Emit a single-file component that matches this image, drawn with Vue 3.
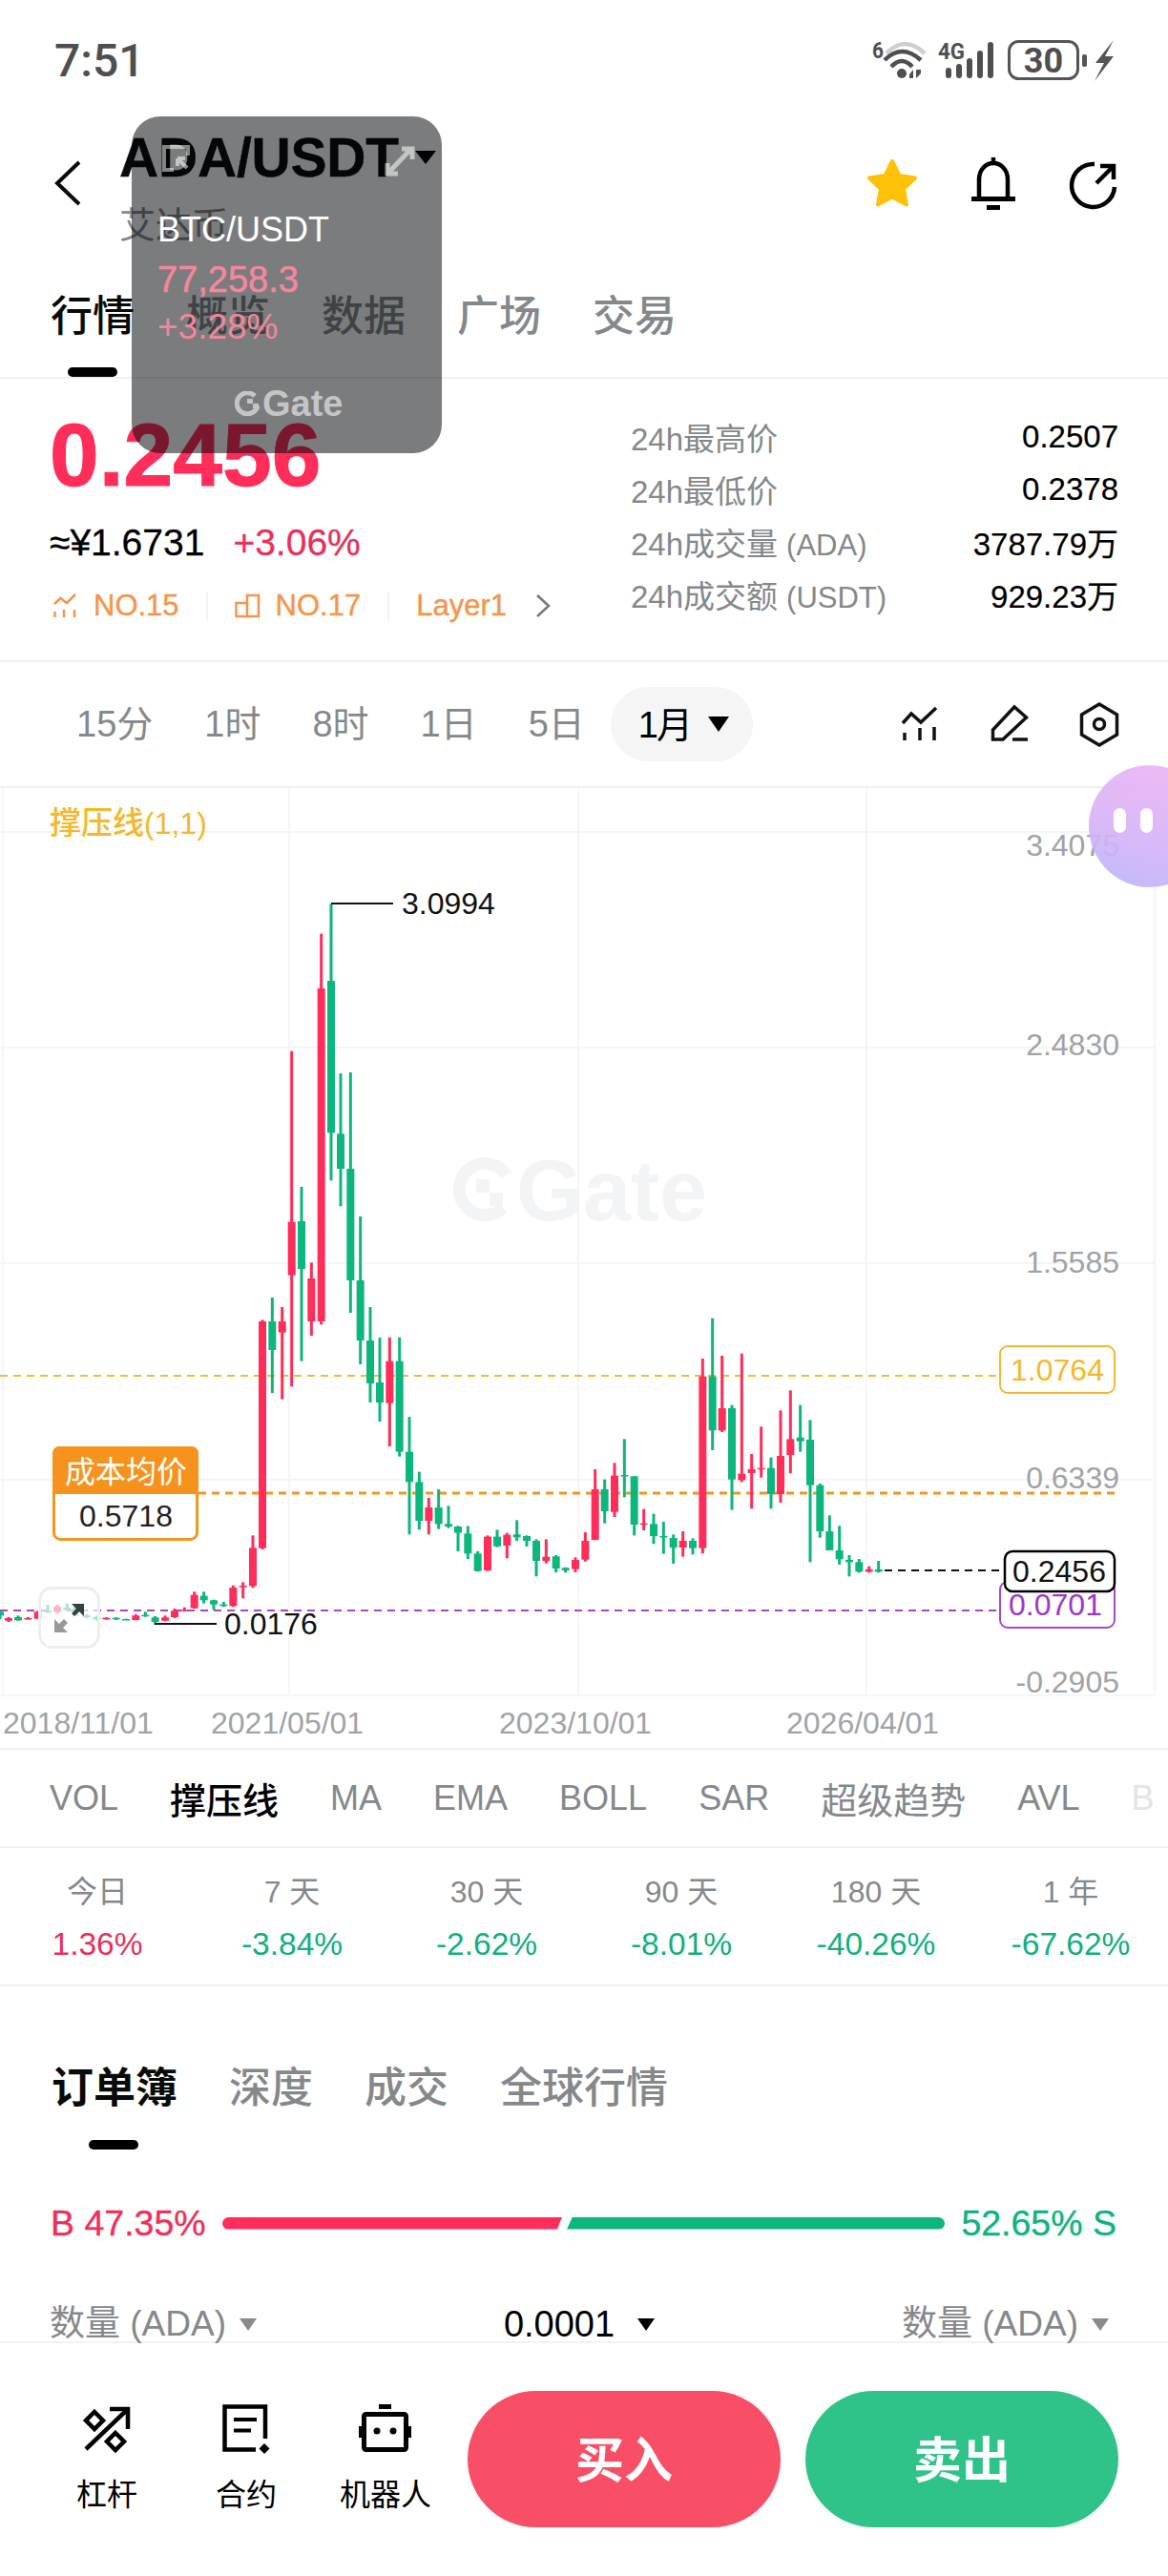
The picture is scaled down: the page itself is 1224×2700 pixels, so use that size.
<script setup>
const RED = '#ff2d5a'
const GREEN = '#0db67c'

function section(ox, oy, list) {
  return list.map(([x, c, wt, bt, bb, wb]) => ({
    x: ox + x / 3,
    color: c === 'r' ? RED : GREEN,
    wt: oy + wt / 3,
    wb: oy + wb / 3,
    bt: oy + bt / 3,
    bh: Math.max((bb - bt) / 3, 1.5)
  }))
}

const candles = [
  ...section(0, 1480, [
    [0,'g',625,628,640,652],[27,'r',645,648,656,660],[57,'g',640,645,655,656],[88,'r',645,648,651,652],
    [119,'r',625,628,650,651],[150,'g',606,625,630,632],[180,'r',606,612,628,634],[211,'g',602,615,622,625],
    [242,'g',605,612,630,640],[273,'g',636,640,645,648],[304,'g',640,645,652,656],[334,'r',646,647,652,653],
    [365,'g',646,647,652,654],[396,'g',650,651,653,654],[427,'r',636,640,654,655],[457,'g',628,638,642,644],
    [488,'g',642,646,660,668],[519,'r',640,646,656,658],[549,'r',618,625,645,648],[580,'r',614,622,625,626],
    [611,'r',565,575,617,618],[641,'g',565,578,592,602],[672,'g',590,592,605,622],[703,'g',597,605,610,613],
    [733,'r',545,552,610,613],[764,'r',535,546,551,586],[795,'r',388,427,547,553],[825,'r',-290,-285,428,432]
  ]),
  ...section(200, 900, [
    [256,'g',1380,1455,1545,1680],[287,'r',1410,1455,1490,1700],[317,'r',605,1142,1310,1660],[348,'g',1032,1140,1290,1580],
    [379,'r',1270,1320,1455,1500],[410,'r',236,408,1455,1465],[441,'g',142,384,862,1012],[471,'g',675,865,975,1093],
    [502,'g',672,975,1326,1428],[533,'g',1125,1326,1515,1590],[564,'g',1410,1515,1650,1710],[594,'g',1506,1647,1710,1770]
  ]),
  ...section(400, 1300, [
    [25,'r',305,380,512,648],[56,'g',305,380,665,680],[87,'g',555,665,760,925],[118,'g',728,760,882,910],
    [148,'r',810,840,882,925],[179,'g',783,840,892,908],[210,'g',835,892,900,905],[240,'g',898,900,920,978],
    [271,'g',898,922,985,1002],[302,'g',978,985,1040,1042],[333,'r',928,932,1038,1040],[363,'g',910,932,962,965],
    [394,'r',920,926,960,1000],[425,'g',880,925,934,945],[456,'g',928,930,945,963],[486,'g',940,945,1008,1057],
    [517,'r',940,995,1008,1016],[548,'g',990,994,1032,1044],[578,'g',1028,1030,1038,1045],[609,'r',997,1005,1034,1044],
    [640,'r',918,945,1004,1010],[671,'r',720,783,942,943],[701,'g',752,783,852,890],[732,'r',700,740,854,870],
    [763,'g',625,738,741,808],[794,'g',742,742,894,928],[824,'r',845,890,894,912],[855,'g',860,892,930,955],
    [886,'g',885,930,934,986],[917,'g',925,936,966,1017],[947,'r',915,945,966,995],[978,'g',937,945,968,988],
    [1009,'r',372,428,968,985],[1040,'g',245,428,598,660],[1070,'r',363,528,598,603],[1101,'g',518,528,752,848],
    [1132,'r',356,734,754,760],[1163,'r',672,720,732,844],[1193,'r',586,716,719,746],[1224,'g',683,716,798,844]
  ]),
  ...section(800, 1300, [
    [54,'r',535,678,798,825],[85,'r',472,625,675,733],[116,'g',518,620,632,665],[147,'g',565,627,770,1012],
    [178,'g',765,770,915,935],[208,'g',865,915,975,975],[239,'g',898,975,1003,1020],[270,'g',990,1005,1012,1057],
    [301,'g',1002,1012,1042,1045],[332,'r',1025,1035,1042,1045],[362,'g',1008,1035,1042,1045]
  ])
]

const gridV = [3, 303, 606, 908, 1210]
const gridH = [872, 1098, 1324, 1551, 1777]
const yLabels = [
  { t: '3.4075', y: 897 }, { t: '2.4830', y: 1106 }, { t: '1.5585', y: 1334 },
  { t: '0.6339', y: 1560 }, { t: '-0.2905', y: 1774 }
]
const xLabels = [
  { t: '2018/11/01', x: 3 }, { t: '2021/05/01', x: 221 }, { t: '2023/10/01', x: 523 }, { t: '2026/04/01', x: 824 }
]
const tabs = ['概览', '数据', '广场', '交易']
const intervals = ['15分', '1时', '8时', '1日', '5日']
const stats = [
  { l: '24h最高价', s: '', v: '0.2507' },
  { l: '24h最低价', s: '', v: '0.2378' },
  { l: '24h成交量', s: '(ADA)', v: '3787.79万' },
  { l: '24h成交额', s: '(USDT)', v: '929.23万' }
]
const indicators = [
  { t: 'VOL' }, { t: '撑压线', on: true, cjk: true }, { t: 'MA' }, { t: 'EMA' }, { t: 'BOLL' },
  { t: 'SAR' }, { t: '超级趋势', cjk: true }, { t: 'AVL' }
]
const periods = [
  { l: '今日', v: '1.36%', up: true }, { l: '7 天', v: '-3.84%' }, { l: '30 天', v: '-2.62%' },
  { l: '90 天', v: '-8.01%' }, { l: '180 天', v: '-40.26%' }, { l: '1 年', v: '-67.62%' }
]
const bookTabs = ['深度', '成交', '全球行情']
</script>

<template>
  <div class="page">
    <header class="status">
      <span class="time">7:51</span>
      <svg class="status-icons" viewBox="914 40 254 46" width="254" height="46">
        <text x="914" y="61" class="st-small" textLength="12" lengthAdjust="spacingAndGlyphs">6</text>
        <path d="M929 56Q948 36 969 56" fill="none" stroke="#cfcfcf" stroke-width="4.500" />
        <path d="M927 63Q945 45 965 63" fill="none" stroke="#4f4f4f" stroke-width="4.500" />
        <path d="M934 70Q945 58 956 70" fill="none" stroke="#4f4f4f" stroke-width="4.500" />
        <circle cx="945" cy="77" r="5" fill="#4f4f4f" />
        <path d="M953 82V78L957 73V82ZM960 73V82L965 77V73Z" fill="#4f4f4f" />
        <text x="983" y="62" class="st-small" textLength="28" lengthAdjust="spacingAndGlyphs">4G</text>
        <rect v-for="(b, i) in [[991,71],[1002,67],[1013,61],[1024,53],[1035,44]]" :key="i" :x="b[0]" :y="b[1]" width="6" :height="82 - b[1]" rx="3" fill="#4f4f4f" />
        <rect x="1057.500" y="43.500" width="72" height="39" rx="10" fill="none" stroke="#555" stroke-width="3" />
        <rect x="1134" y="57" width="5" height="13" rx="2" fill="#555" />
        <text x="1093.500" y="76" text-anchor="middle" class="st-batt">30</text>
        <path d="M1167 42L1148 66H1157L1147 85L1167 59H1158Z" fill="#555" />
      </svg>
    </header>

    <nav class="nav">
      <svg class="back" width="28" height="48" viewBox="0 0 28 48"><path d="M26 2L3 24L26 46" fill="none" stroke="#0a0a0a" stroke-width="4" /></svg>
      <div class="pair">
        <div class="pair-title"><span>ADA/USDT</span><i class="caret caret-lg"></i></div>
        <div class="pair-sub">艾达币</div>
      </div>
      <svg class="nav-icons" viewBox="905 160 268 64" width="268" height="64">
        <path d="M935 169L942.500 184L959 186.500L947 198L950 214.500L935 206.500L920 214.500L923 198L911 186.500L927.500 184Z" fill="#fdc10a" stroke="#fdc10a" stroke-width="4" stroke-linejoin="round" />
        <path d="M1041 165V171M1026 208V188C1026 178 1033 171 1041 171C1049 171 1056 178 1056 188V208" fill="none" stroke="#000" stroke-width="4.500" />
        <rect x="1018" y="206" width="46" height="5" fill="#000" />
        <rect x="1034" y="215" width="14" height="5" fill="#000" />
        <path d="M1147 172A22.500 22.500 0 1 0 1168 196" fill="none" stroke="#000" stroke-width="4.500" />
        <path d="M1153 174H1167V188M1167 174L1149 192" fill="none" stroke="#000" stroke-width="4.500" />
      </svg>
    </nav>

    <div class="tabs">
      <div class="tab active">行情<b class="bar"></b></div>
      <div v-for="t in tabs" :key="t" class="tab">{{ t }}</div>
    </div>

    <section class="hero">
      <div class="hero-left">
        <div class="price">0.2456</div>
        <div class="sub-price"><span>≈¥1.6731</span><span class="up">+3.06%</span></div>
        <div class="tags">
          <svg width="28" height="28" viewBox="55 621 28 28"><path d="M58 633L64.500 627L71 632L80 623M58.500 641V647M68 639V647M79 639V647" fill="none" stroke="#f5954a" stroke-width="2.500" /></svg>
          <span class="tag t1">NO.15</span>
          <i class="sep"></i>
          <svg class="ic2" width="28" height="28" viewBox="245 621 28 28"><path d="M247.500 632H259V646H247.500ZM259 646H271V624H259V632" fill="none" stroke="#f5954a" stroke-width="2.500" /></svg>
          <span class="tag t1">NO.17</span>
          <i class="sep"></i>
          <span class="tag t3">Layer1</span>
          <svg class="chev" width="16" height="26" viewBox="0 0 16 26"><path d="M2 2L14 13L2 24" fill="none" stroke="#777" stroke-width="2.500" /></svg>
        </div>
      </div>
      <div class="hero-right">
        <div v-for="s in stats" :key="s.l" class="stat">
          <span class="stat-l">{{ s.l }}<small v-if="s.s">{{ s.s }}</small></span>
          <span class="stat-v">{{ s.v }}</span>
        </div>
      </div>
    </section>

    <section class="intervals">
      <span v-for="t in intervals" :key="t" class="iv">{{ t }}</span>
      <span class="pill"><span class="pill-t">1月</span><i class="caret caret-md"></i></span>
      <svg class="iv-icons" viewBox="940 734 236 50" width="236" height="50">
        <path d="M946 758L955 748L965 757L981 742M948 768V776M964 763V776M979 762V776" fill="none" stroke="#111" stroke-width="3.500" />
        <path d="M1040.500 775V765L1063 741L1075.500 752L1051 775ZM1061 775H1077" fill="none" stroke="#111" stroke-width="3.500" />
        <path d="M1152 738L1170.500 749V770L1152 781L1133.500 770V749Z" fill="none" stroke="#111" stroke-width="3.500" />
        <circle cx="1152" cy="759" r="5.500" fill="none" stroke="#111" stroke-width="3.500" />
      </svg>
    </section>

    <section class="chart">
      <svg viewBox="0 826 1224 1006" width="1224" height="1006">
        <line v-for="x in gridV" :key="'v' + x" :x1="x" :x2="x" y1="826" y2="1777" stroke="#f4f5f5" stroke-width="2" />
        <line v-for="y in gridH" :key="'h' + y" x1="0" x2="1210" :y1="y" :y2="y" stroke="#f4f5f5" stroke-width="2" />

        <g fill="#f2f4f5">
          <path d="M531 1232A27 27 0 1 0 527 1266" fill="none" stroke="#f2f4f5" stroke-width="13" />
          <rect x="499" y="1236" width="14" height="14" />
          <rect x="513" y="1250" width="14" height="14" />
          <text x="541" y="1279" class="wm">Gate</text>
        </g>

        <line x1="0" x2="1047" y1="1442" y2="1442" stroke="#f5bb2d" stroke-width="2" stroke-dasharray="8 6" />
        <line x1="0" x2="1047" y1="1688" y2="1688" stroke="#a845cf" stroke-width="2" stroke-dasharray="8 6" />
        <line x1="208" x2="1168" y1="1565" y2="1565" stroke="#f0971f" stroke-width="3" stroke-dasharray="8 6" />
        <line x1="927" x2="1052" y1="1646" y2="1646" stroke="#111" stroke-width="2" stroke-dasharray="8 6" />

        <g v-for="(c, i) in candles" :key="i">
          <rect :x="c.x - 1.500" :y="c.wt" width="3" :height="c.wb - c.wt" :fill="c.color" />
          <rect :x="c.x - 4" :y="c.bt" width="8" :height="c.bh" :fill="c.color" />
        </g>

        <line x1="347" x2="412" y1="947" y2="947" stroke="#111" stroke-width="2" />
        <text x="421" y="958" class="lbl dark">3.0994</text>
        <line x1="162" x2="227" y1="1702" y2="1702" stroke="#111" stroke-width="2" />
        <text x="235" y="1713" class="lbl dark">0.0176</text>

        <text x="52" y="874" class="legend">撑压线<tspan class="legend-s">(1,1)</tspan></text>

        <text v-for="l in yLabels" :key="l.t" x="1173" :y="l.y" text-anchor="end" class="lbl grey">{{ l.t }}</text>
        <text v-for="l in xLabels" :key="l.t" :x="l.x" y="1817" class="lbl grey">{{ l.t }}</text>

        <rect x="1048" y="1411" width="120" height="49" rx="8" fill="#fff" stroke="#f5b82a" stroke-width="2" />
        <text x="1108" y="1447" text-anchor="middle" class="lbl" fill="#f5b82a">1.0764</text>
        <rect x="1048" y="1658" width="120" height="48" rx="8" fill="#fff" stroke="#a845cf" stroke-width="2" />
        <text x="1106" y="1693" text-anchor="middle" class="lbl" fill="#a136c9">0.0701</text>
        <rect x="1053" y="1626" width="115" height="42" rx="8" fill="#fff" stroke="#000" stroke-width="2.500" />
        <text x="1110" y="1658" text-anchor="middle" class="lbl dark">0.2456</text>

        <rect x="56.500" y="1517.500" width="150" height="96" rx="7" fill="#fff" stroke="#f0971f" stroke-width="3" />
        <path d="M55 1566V1523A7 7 0 0 1 62 1516H201A7 7 0 0 1 208 1523V1566Z" fill="#f5931e" />
        <text x="132" y="1554" text-anchor="middle" class="avg">成本均价</text>
        <text x="132" y="1600" text-anchor="middle" class="lbl" fill="#222">0.5718</text>

        <rect x="41.500" y="1664.500" width="62" height="62" rx="13" fill="#fff" fill-opacity=".65" stroke="#eee" stroke-width="3" />
        <path d="M88 1681V1694L83 1689L78 1694L75 1691L80 1686L75 1681Z" fill="#33413f" />
        <path d="M57 1711V1697L62 1702L67 1697L71 1701L66 1706L71 1711Z" fill="#999" />
      </svg>
    </section>

    <section class="indicators">
      <span v-for="n in indicators" :key="n.t" class="ind" :class="{ on: n.on, cjk: n.cjk }">{{ n.t }}</span>
      <span class="ind faded">B</span>
    </section>

    <section class="periods">
      <div v-for="p in periods" :key="p.l" class="period">
        <span class="period-l">{{ p.l }}</span>
        <span class="period-v" :class="p.up ? 'up' : 'down'">{{ p.v }}</span>
      </div>
    </section>

    <section class="book">
      <div class="book-tabs">
        <div class="book-tab active">订单簿<b class="bar"></b></div>
        <div v-for="t in bookTabs" :key="t" class="book-tab">{{ t }}</div>
      </div>
      <div class="ratio">
        <span class="ratio-l">B 47.35%</span>
        <div class="ratio-bar"><i class="r"></i><i class="g"></i></div>
        <span class="ratio-r">52.65% S</span>
      </div>
      <div class="amount">
        <span class="am"><span>数量 (ADA)</span><i class="caret caret-grey"></i></span>
        <span class="am dark-am"><span>0.0001</span><i class="caret caret-sm"></i></span>
        <span class="am"><span>数量 (ADA)</span><i class="caret caret-grey"></i></span>
      </div>
    </section>

    <footer class="footer">
      <div class="tools">
        <div class="tool">
          <svg viewBox="80 2518 60 56" width="60" height="56">
            <path d="M88 2567L132 2525M113 2525H132V2546" fill="none" stroke="#000" stroke-width="4.500" />
            <path d="M97 2528L106 2537L97 2546L88 2537Z M119 2550L128 2559L119 2568L110 2559Z" fill="none" stroke="#000" stroke-width="4.500" />
          </svg>
          <span>杠杆</span>
        </div>
        <div class="tool">
          <svg viewBox="228 2518 60 56" width="60" height="56">
            <path d="M278 2556V2522.500H235.500V2567.500H268" fill="none" stroke="#000" stroke-width="4.500" />
            <path d="M245 2536H269M245 2547.500H263" fill="none" stroke="#000" stroke-width="4" />
            <path d="M277 2561L282.500 2566.500L277 2572L271.500 2566.500Z" fill="#000" />
          </svg>
          <span>合约</span>
        </div>
        <div class="tool">
          <svg viewBox="374 2518 60 56" width="60" height="56">
            <rect x="397" y="2520" width="13" height="5" fill="#000" />
            <rect x="381.500" y="2530.500" width="44" height="37" fill="none" stroke="#000" stroke-width="5" rx="2" />
            <rect x="376" y="2543" width="4" height="12" fill="#000" />
            <rect x="427" y="2543" width="4" height="12" fill="#000" />
            <circle cx="395" cy="2548" r="3.500" fill="#000" />
            <circle cx="412" cy="2548" r="3.500" fill="#000" />
          </svg>
          <span>机器人</span>
        </div>
      </div>
      <div class="btn buy">买入</div>
      <div class="btn sell">卖出</div>
    </footer>

    <aside class="pip">
      <svg class="pip-top" viewBox="0 0 325 70" width="325" height="70">
        <path d="M44 56H34V32H59V41" fill="none" stroke="#fff" stroke-opacity=".5" stroke-width="4" />
        <path d="M48 44L58 54M48 44H56M48 44V52" fill="none" stroke="#fff" stroke-opacity=".55" stroke-width="4" />
        <path d="M269 59L292 35M283 34H294V45M268 49V60H279" fill="none" stroke="#fff" stroke-opacity=".55" stroke-width="5" />
      </svg>
      <div class="pip-sym">BTC/USDT</div>
      <div class="pip-price">77,258.3</div>
      <div class="pip-chg">+3.28%</div>
      <div class="pip-logo">
        <svg viewBox="0 0 26 26" width="26" height="26">
          <path d="M21 5A11 11 0 1 0 24 15" fill="none" stroke="#c4c5c6" stroke-width="5" />
          <rect x="13" y="8" width="6" height="5" fill="#c4c5c6" />
          <rect x="19" y="13" width="6" height="5" fill="#c4c5c6" />
        </svg>
        <span>Gate</span>
      </div>
    </aside>

    <aside class="ball"><i></i><i></i></aside>
  </div>
</template>

<style scoped>
.page {
  position: relative;
  width: 1224px;
  height: 2700px;
  overflow: hidden;
  background: #fff;
  color: #000;
  font-family: "Liberation Sans", "Noto Sans CJK SC", sans-serif;
}
.status {
  height: 100px;
  box-sizing: border-box;
  padding: 40px 56px 0 57px;
  display: flex;
  justify-content: space-between;
  align-items: flex-start;
}
.time {
  font-family: Roboto, sans-serif;
  font-size: 48px;
  font-weight: 500;
  line-height: 47px;
  color: #4f4f4f;
}
.status-icons { display: block; }
.st-small { font-family: Roboto, sans-serif; font-weight: 700; font-size: 24px; fill: #4f4f4f; }
.st-batt { font-family: Roboto, sans-serif; font-weight: 700; font-size: 36px; fill: #4f4f4f; }
.nav {
  height: 162px;
  box-sizing: border-box;
  padding: 0 51px 0 57px;
  display: flex;
  align-items: center;
}
.back { flex: none; margin-top: 22px; }
.pair { margin-left: 40px; flex: 1; align-self: flex-start; margin-top: 35px; }
.pair-title {
  display: flex;
  align-items: center;
  font-size: 57px;
  line-height: 60px;
  font-weight: 700;
  letter-spacing: -0.2px;
  color: #0a0a0a;
  -webkit-text-stroke: 0.4px #0a0a0a;
}
.pair-sub { font-size: 38px; line-height: 44px; margin-top: 19px; color: #85888b; }
.nav-icons { flex: none; margin-top: 22px; }
.caret { display: inline-block; width: 0; height: 0; border-style: solid; border-color: #000 transparent transparent; }
.caret-lg { border-width: 14px 11px 0; margin-left: 17px; }
.caret-md { border-width: 16px 11px 0; }
.caret-sm { border-width: 13px 9px 0; margin-left: 24px; }
.caret-grey { border-width: 13px 9px 0; border-top-color: #8a8a8a; margin-left: 14px; }
.tabs {
  height: 135px;
  box-sizing: border-box;
  padding: 0 0 0 53px;
  display: flex;
  gap: 54px;
  border-bottom: 2px solid #f0f0f0;
}
.tab {
  position: relative;
  font-size: 44px;
  font-weight: 500;
  line-height: 60px;
  margin-top: 40px;
  color: #85888b;
}
.tab.active { color: #0a0a0a; }
.bar {
  position: absolute;
  left: 18px;
  width: 52px;
  height: 10px;
  top: 83px;
  border-radius: 5px;
  background: #000;
}
.hero {
  height: 297px;
  box-sizing: border-box;
  display: flex;
  padding: 0 52px 0 52px;
  border-bottom: 2px solid #f0f0f0;
}
.hero-left { width: 609px; flex: none; }
.price {
  font-size: 93px;
  font-weight: 700;
  line-height: 92px;
  margin-top: 34px;
  color: #ff2d5a;
  -webkit-text-stroke: 1px #ff2d5a;
}
.sub-price {
  display: flex;
  gap: 30px;
  font-size: 39px;
  line-height: 44px;
  margin-top: 24px;
  -webkit-text-stroke: 0.3px currentColor;
}
.up { color: #e8305c; }
.down { color: #10b07f; }
.tags { display: flex; align-items: center; margin-top: 24px; height: 40px; margin-left: 2px; }
.tag { font-size: 31px; color: #f5954a; -webkit-text-stroke: 0.4px #f5954a; }
.t1 { margin-left: 16px; }
.t3 { margin-left: 28px; }
.sep { width: 2px; height: 30px; background: #f3f3f3; margin-left: 28px; }
.ic2 { margin-left: 27px; }
.chev { margin-left: 30px; }
.hero-right { flex: 1; padding-top: 33px; }
.stat {
  display: flex;
  justify-content: space-between;
  align-items: center;
  height: 55px;
  font-size: 33px;
}
.stat-l { color: #85888b; }
.stat-l small { font-size: 31px; margin-left: 9px; }
.stat-v { color: #000; -webkit-text-stroke: 0.2px #000; }
.intervals {
  height: 132px;
  box-sizing: border-box;
  padding: 0 48px 0 80px;
  display: flex;
  align-items: center;
  gap: 54px;
  border-bottom: 2px solid #f0f0f0;
}
.iv { font-size: 38px; color: #85888b; padding-bottom: 8px; }
.pill {
  display: flex;
  align-items: center;
  gap: 18px;
  height: 78px;
  width: 149px;
  box-sizing: border-box;
  padding: 0 0 0 29px;
  margin-left: -27px;
  border-radius: 39px;
  background: #f5f5f5;
  font-size: 38px;
  color: #000;
}
.pill-t { letter-spacing: -2px; padding-bottom: 6px; }
.iv-icons { margin-left: auto; flex: none; }
.chart { height: 1006px; }
.chart svg { display: block; }
.lbl { font-size: 32px; }
.dark { fill: #111; }
.grey { fill: #a0a3a6; }
.wm { font-size: 90px; font-weight: 700; fill: #f2f4f5; }
.legend { font-size: 33px; fill: #f5b82a; font-weight: 500; }
.legend-s { font-size: 32px; font-weight: 400; }
.avg { font-size: 32px; fill: #fff; }
.indicators {
  height: 105px;
  box-sizing: border-box;
  border-top: 2px solid #f0f0f0;
  border-bottom: 2px solid #f2f2f2;
  padding-left: 52px;
  display: flex;
  align-items: center;
  gap: 54px;
  white-space: nowrap;
}
.ind { font-size: 36px; color: #85888b; }
.ind.cjk { font-size: 38px; }
.ind.on { color: #000; font-weight: 500; }
.ind.faded { color: #e4e4e4; }
.periods {
  height: 145px;
  box-sizing: border-box;
  border-bottom: 2px solid #f0f0f0;
  display: grid;
  grid-template-columns: repeat(6, 204px);
}
.period {
  display: flex;
  flex-direction: column;
  align-items: center;
  padding-top: 24px;
}
.period-l { font-size: 32px; line-height: 44px; color: #85888b; }
.period-v { font-size: 33.500px; line-height: 44px; margin-top: 11px; }
.book { height: 372px; }
.book-tabs {
  display: flex;
  gap: 54px;
  padding: 77px 0 0 54px;
  height: 170px;
  box-sizing: border-box;
}
.book-tab {
  position: relative;
  font-size: 44px;
  line-height: 60px;
  font-weight: 500;
  color: #85888b;
  height: 60px;
}
.book-tab.active { font-weight: 700; color: #0a0a0a; }
.book-tab .bar { left: 39px; top: 84px; }
.ratio {
  display: flex;
  align-items: center;
  height: 46px;
  margin-top: 55px;
  padding: 0 54px 0 53px;
  font-size: 37.500px;
  -webkit-text-stroke: 0.4px currentColor;
}
.ratio-l { color: #f02f5b; width: 164px; white-space: nowrap; }
.ratio-r { color: #0fb47f; width: 164px; white-space: nowrap; text-align: right; }
.ratio-bar { flex: 1; display: flex; margin: 0 16px; height: 13px; }
.ratio-bar .r {
  width: 356px;
  background: #ff2d5a;
  border-radius: 7px 0 0 7px;
  clip-path: polygon(0 0, 100% 0, 98.600% 100%, 0 100%);
}
.ratio-bar .g {
  flex: 1;
  margin-left: 5px;
  background: #0db67c;
  border-radius: 0 7px 7px 0;
  clip-path: polygon(1.500% 0, 100% 0, 100% 100%, 0 100%);
}
.amount {
  display: flex;
  justify-content: space-between;
  padding: 0 62px 0 52px;
  margin-top: 65px;
  font-size: 37px;
  line-height: 36px;
  height: 36px;
}
.am { display: flex; align-items: center; color: #85888b; }
.dark-am { color: #000; font-size: 38px; }
.footer {
  height: 246px;
  box-sizing: border-box;
  border-top: 2px solid #f2f2f2;
  display: flex;
  padding: 50px 52px 0 39px;
  align-items: flex-start;
}
.tools { display: flex; width: 438px; margin-right: 13px; flex: none; }
.tool {
  width: 146px;
  display: flex;
  flex-direction: column;
  align-items: center;
  font-size: 32px;
  line-height: 40px;
  padding-top: 12px;
}
.tool svg { display: block; margin-bottom: 21px; }
.btn {
  height: 143px;
  width: 328px;
  box-sizing: border-box;
  padding-bottom: 6px;
  flex: none;
  border-radius: 72px;
  color: #fff;
  font-size: 51px;
  font-weight: 700;
  display: flex;
  align-items: center;
  justify-content: center;
}
.buy { background: #f94f66; }
.sell { background: #2fc38a; margin-left: 26px; }
.pip {
  position: absolute;
  left: 138px;
  top: 122px;
  width: 325px;
  height: 353px;
  border-radius: 30px;
  background: rgba(0, 3, 5, 0.52);
  color: #fff;
}
.pip-top { position: absolute; left: 0; top: 0; }
.pip-sym { position: absolute; left: 27px; top: 99px; font-size: 36px; line-height: 40px; white-space: nowrap; }
.pip-price { position: absolute; left: 27px; top: 151px; font-size: 38px; line-height: 40px; color: #f4879e; -webkit-text-stroke: 0.6px #f4879e; white-space: nowrap; }
.pip-chg { position: absolute; left: 27px; top: 201px; font-size: 37px; line-height: 40px; color: #f4879e; white-space: nowrap; }
.pip-logo {
  position: absolute;
  left: 108px;
  top: 281px;
  display: flex;
  align-items: center;
  gap: 3px;
  font-size: 38px;
  font-weight: 700;
  line-height: 40px;
  color: #c4c5c6;
}
.ball {
  position: absolute;
  left: 1141px;
  top: 802px;
  width: 128px;
  height: 128px;
  border-radius: 50%;
  background: linear-gradient(200deg, #f0b2f6 0%, #d8b2f8 55%, #b9b4fb 100%);
  opacity: .9;
}
.ball i {
  position: absolute;
  top: 45px;
  left: 26px;
  width: 13px;
  height: 26px;
  border-radius: 7px;
  background: #fff;
}
.ball i + i { left: 54px; }
</style>
<style>
html, body { background: #fff; }
</style>
